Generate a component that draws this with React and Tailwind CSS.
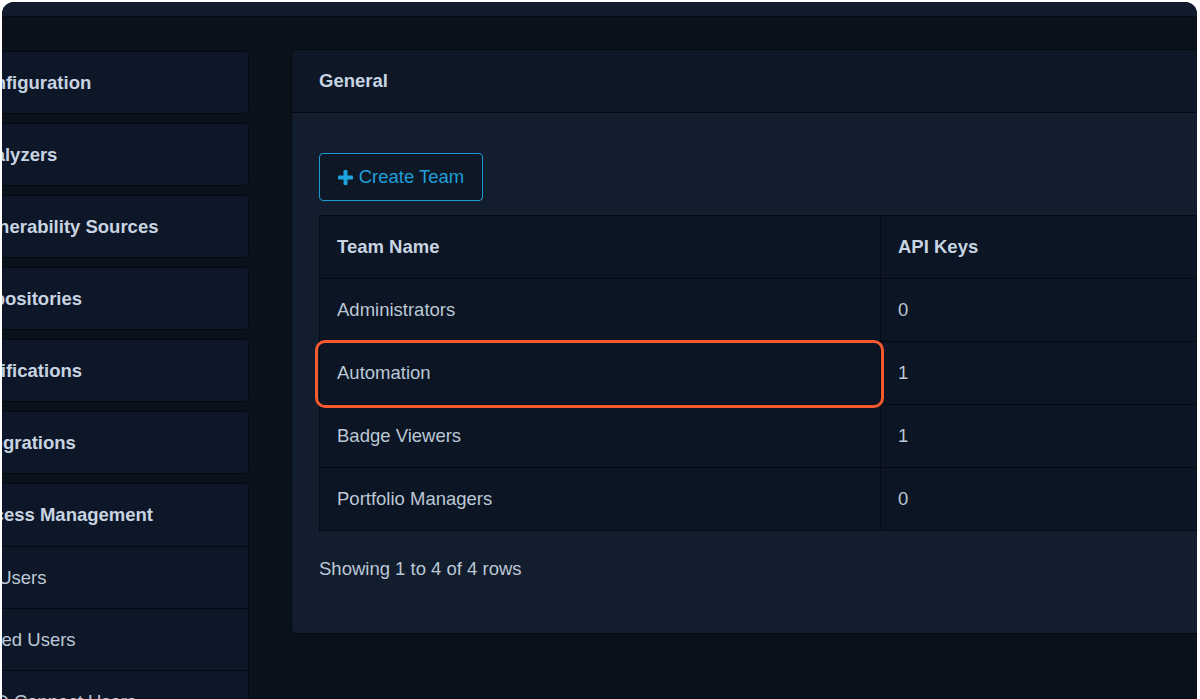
import React from "react";

const font = { fontFamily: '"Liberation Sans", Arial, sans-serif' };

function SideCard({ label }) {
  return (
    <div className="h-[63px] mb-[9px] flex items-center pl-[40px] bg-[#0d1727] border border-[#050a11] rounded-[4px] text-[18.5px] font-bold text-[#c8d4e1] whitespace-nowrap">
      {label}
    </div>
  );
}

export default function App() {
  const rows = [
    ["Administrators", "0"],
    ["Automation", "1"],
    ["Badge Viewers", "1"],
    ["Portfolio Managers", "0"],
  ];
  return (
    <div className="w-[1200px] h-[699px] bg-white overflow-hidden" style={font}>
      <div className="ml-[2px] mt-[2px] w-[1195px] h-[697px] rounded-t-[12px] overflow-hidden bg-[#0a121c] flex flex-col">
        <div className="h-[15px] bg-[#131c2d] border-b border-[#060b12] shrink-0" />
        <div className="flex pt-[34px] bg-gradient-to-b from-[#0a111b] to-[#09111a] flex-1">
          {/* Sidebar */}
          <div className="w-[320px] ml-[-73px] shrink-0 flex flex-col">
            <SideCard label="Configuration" />
            <SideCard label="Analyzers" />
            <SideCard label="Vulnerability Sources" />
            <SideCard label="Repositories" />
            <SideCard label="Notifications" />
            <SideCard label="Integrations" />
            <div className="bg-[#0d1727] border border-[#050a11] rounded-[4px] text-[18.5px] text-[#bcc8d6] whitespace-nowrap">
              <div className="h-[63px] flex items-center pl-[40px] font-bold text-[#c8d4e1] border-b border-[#050a11]">
                Access Management
              </div>
              <div className="h-[62px] flex items-center pl-[15px] border-b border-[#050a11]">LDAP Users</div>
              <div className="h-[62px] flex items-center pl-[15px] border-b border-[#050a11]">Managed Users</div>
              <div className="h-[62px] flex items-center pl-[15px] border-b border-[#050a11]">OpenID Connect Users</div>
            </div>
          </div>

          {/* Main panel */}
          <div className="ml-[42px] mt-[-2px] w-[1000px] shrink-0 self-start rounded-[5px] border border-[#050a11] bg-[#121d2e] overflow-hidden">
            <div className="h-[63px] flex items-center px-[27px] bg-[#0d1726] border-b border-[#050a11] text-[18.5px] font-bold text-[#c8d4e1]">
              General
            </div>
            <div className="px-[27px] pt-[40px] pb-[50px]">
              <div className="flex items-center justify-between h-[48px]">
                <button className="h-[48px] w-[164px] flex items-center justify-center gap-[6px] border-[1.5px] border-[#1b98d2] rounded-[4px] bg-[#0d1726] text-[#1f9fd9] text-[18.5px]">
                  <svg width="15" height="15" viewBox="0 0 15 15">
                    <rect x="5.5" y="0" width="4" height="15" rx="1" fill="#1fa3dd" />
                    <rect x="0" y="5.5" width="15" height="4" rx="1" fill="#1fa3dd" />
                  </svg>
                  <span>Create Team</span>
                </button>
                <div className="h-[48px] w-[130px] mr-[-112px] rounded-[5px] bg-[#223551] border border-[#070c14]" />
              </div>
              <div className="relative mt-[14px]">
                <table className="w-[1000px] border-collapse bg-[#0b1523] text-[18.5px] text-[#bcc8d6]">
                  <thead>
                    <tr className="h-[63px]">
                      <th className="w-[561px] text-left font-bold pl-[17px] border border-[#050a11] text-[#c8d4e1]">Team Name</th>
                      <th className="text-left font-bold pl-[17px] border border-[#050a11] text-[#c8d4e1]">API Keys</th>
                    </tr>
                  </thead>
                  <tbody>
                    {rows.map(([name, keys]) => (
                      <tr key={name} className="h-[63px]">
                        <td className="pl-[17px] border border-[#050a11]">{name}</td>
                        <td className="pl-[17px] border border-[#050a11]">{keys}</td>
                      </tr>
                    ))}
                  </tbody>
                </table>
                <div className="absolute left-[-4px] top-[125px] w-[569px] h-[68px] border-[3px] border-[#f4592f] rounded-[10px] pointer-events-none" />
              </div>
              <div className="mt-[24px] text-[18.5px] text-[#bcc8d6]">Showing 1 to 4 of 4 rows</div>
            </div>
          </div>
        </div>
      </div>
    </div>
  );
}
